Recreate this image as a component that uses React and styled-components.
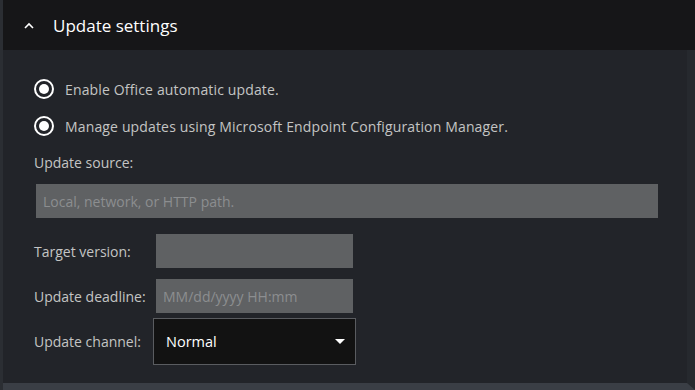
import React from "react";
import styled, { createGlobalStyle } from "styled-components";

const Global = createGlobalStyle`
  html, body { margin: 0; padding: 0; background: #222429; }
  body { font-family: "Open Sans", "Noto Sans", sans-serif; }
  * { box-sizing: border-box; }
`;

const Frame = styled.div`
  width: 695px;
  height: 390px;
  display: flex;
  flex-direction: column;
  background: #222429;
  border-left: 3px solid #2b2e33;
  overflow: hidden;
`;

const Header = styled.div`
  height: 50px;
  flex: none;
  display: flex;
  align-items: center;
  background: #161618;
  padding-left: 20px;
  gap: 18px;
  color: #ffffff;
  font-size: 17px;
`;

const Chevron = styled.svg`
  width: 12px;
  height: 12px;
  margin-top: 1px;
`;

const Body = styled.div`
  flex: 1;
  display: flex;
  flex-direction: column;
  padding: 28px 0 0 29px;
  border-right: 8px solid #26292e;
  border-bottom: 7px solid #3a3e45;
  color: #c4c4c4;
  font-size: 14px;
`;

const RadioRow = styled.label`
  display: flex;
  align-items: center;
  gap: 11px;
  height: 22px;
  margin-bottom: ${(p) => p.$mb || 0}px;
  padding-left: 2px;
  letter-spacing: 0.15px;
`;

const RadioDot = styled.span`
  width: 20px;
  height: 20px;
  border-radius: 50%;
  border: 2px solid #ffffff;
  display: flex;
  align-items: center;
  justify-content: center;
  &::after {
    content: "";
    width: 10px;
    height: 10px;
    border-radius: 50%;
    background: #ffffff;
  }
`;

const Label = styled.div`
  height: 20px;
  line-height: 20px;
  margin-top: ${(p) => p.$mt || 0}px;
  padding-left: 2px;
`;

const WideInput = styled.div`
  margin-top: 11px;
  width: 622px;
  height: 34px;
  margin-left: 4px;
  background: #5f6163;
  color: #8c8e90;
  display: flex;
  align-items: center;
  padding-left: 7px;
`;

const FieldRow = styled.div`
  display: flex;
  align-items: center;
  margin-top: ${(p) => p.$mt || 0}px;
  padding-left: 2px;
`;

const FieldLabel = styled.div`
  width: 122px;
`;

const SmallInput = styled.div`
  width: 197px;
  height: 34px;
  background: #5f6163;
  color: #8c8e90;
  display: flex;
  align-items: center;
  padding-left: 7px;
`;

const Select = styled.div`
  margin-left: -3px;
  width: 203px;
  height: 47px;
  background: #121212;
  border: 1px solid #5a5c60;
  color: #ffffff;
  display: flex;
  align-items: center;
  justify-content: space-between;
  padding: 0 10px 0 12px;
  font-size: 14.5px;
`;

const Arrow = styled.span`
  width: 0;
  height: 0;
  border-left: 5px solid transparent;
  border-right: 5px solid transparent;
  border-top: 5px solid #ffffff;
`;

export default function App() {
  return (
    <>
      <Global />
      <Frame>
        <Header>
          <Chevron viewBox="0 0 12 12">
            <path d="M2 8 L6 4 L10 8" stroke="#fff" strokeWidth="1.6" fill="none" />
          </Chevron>
          <span>Update settings</span>
        </Header>
        <Body>
          <RadioRow $mb={15}>
            <RadioDot />
            <span>Enable Office automatic update.</span>
          </RadioRow>
          <RadioRow>
            <RadioDot />
            <span>Manage updates using Microsoft Endpoint Configuration Manager.</span>
          </RadioRow>
          <Label $mt={16}>Update source:</Label>
          <WideInput>Local, network, or HTTP path.</WideInput>
          <FieldRow $mt={16}>
            <FieldLabel>Target version:</FieldLabel>
            <SmallInput />
          </FieldRow>
          <FieldRow $mt={11}>
            <FieldLabel>Update deadline:</FieldLabel>
            <SmallInput>MM/dd/yyyy HH:mm</SmallInput>
          </FieldRow>
          <FieldRow $mt={5}>
            <FieldLabel>Update channel:</FieldLabel>
            <Select>
              <span>Normal</span>
              <Arrow />
            </Select>
          </FieldRow>
        </Body>
      </Frame>
    </>
  );
}
